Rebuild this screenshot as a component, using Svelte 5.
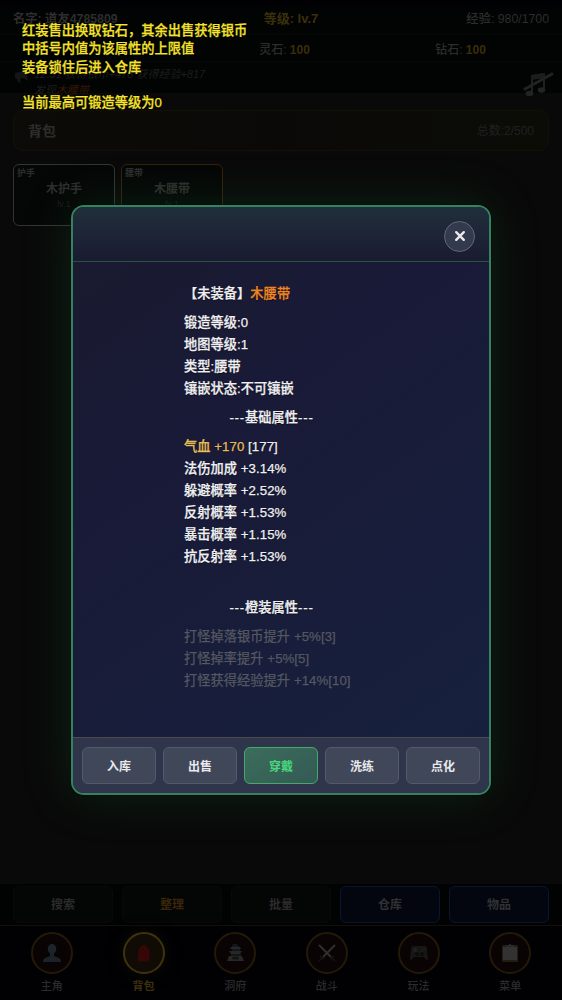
<script>
  const tips = [
    '红装售出换取钻石，其余出售获得银币',
    '中括号内值为该属性的上限值',
    '装备锁住后进入仓库',
    '',
    '当前最高可锻造等级为0'
  ];

  const items = [
    { slot: '护手', name: '木护手', level: 1, quality: 'white' },
    { slot: '腰带', name: '木腰带', level: 1, quality: 'orange' }
  ];

  const info = ['锻造等级:0', '地图等级:1', '类型:腰带', '镶嵌状态:不可镶嵌'];

  const baseStats = [
    { text: '气血 +170', max: '[177]', gold: true },
    { text: '法伤加成 +3.14%' },
    { text: '躲避概率 +2.52%' },
    { text: '反射概率 +1.53%' },
    { text: '暴击概率 +1.15%' },
    { text: '抗反射率 +1.53%' }
  ];

  const orangeStats = ['打怪掉落银币提升 +5%[3]', '打怪掉率提升 +5%[5]', '打怪获得经验提升 +14%[10]'];

  const actions = ['入库', '出售', '穿戴', '洗练', '点化'];

  const tools = [
    { label: '搜索', type: '' },
    { label: '整理', type: 'gold' },
    { label: '批量', type: '' },
    { label: '仓库', type: 'blue' },
    { label: '物品', type: 'blue' }
  ];

  const tabs = [
    { label: '主角', icon: 'user' },
    { label: '背包', icon: 'bag' },
    { label: '洞府', icon: 'castle' },
    { label: '战斗', icon: 'swords' },
    { label: '玩法', icon: 'pad' },
    { label: '菜单', icon: 'menu' }
  ];

  let currentTab = $state('背包');
  let showModal = $state(true);
</script>

<div class="game">
  <header class="status">
    <div class="status-row first">
      <span class="who">名字: <u>道友4785809</u></span>
      <span class="level">等级: lv.7</span>
      <span class="exp">经验: 980/1700</span>
    </div>
    <div class="status-row second">
      <span></span>
      <span>灵石: <b>100</b></span>
      <span>钻石: <b>100</b></span>
    </div>
  </header>

  <section class="log">
    <svg class="horn" viewBox="0 0 16 16" width="16" height="16">
      <path d="M1 5l5-1 6-4 2 13-5-3-3 1 1 4-3-1-1-3-2-1z" fill="#151515" />
    </svg>
    <div class="log-lines">
      <p>12:31 获得银币+478 获得经验+817</p>
      <p>发现<em>木腰带</em></p>
    </div>
    <svg class="music" viewBox="0 0 32 26" width="32" height="26">
      <path d="M10 20V4l12-2v16" fill="none" stroke="#202020" stroke-width="2" />
      <path d="M9 3l14-2v5L9 8z" fill="#1c1c1c" />
      <ellipse cx="7.500" cy="21.500" rx="3.800" ry="2.700" fill="#232323" />
      <ellipse cx="19.500" cy="18" rx="3.800" ry="2.700" fill="#232323" />
      <path d="M3 17L30 2" stroke="#222" stroke-width="3" stroke-linecap="round" />
    </svg>
  </section>

  <main class="content">
    <div class="title">
      <h2>背包</h2>
      <span>总数:2/500</span>
    </div>
    <div class="items">
      {#each items as item}
        <div class="item {item.quality}">
          <span class="slot">{item.slot}</span>
          <strong>{item.name}</strong>
          <small>lv.{item.level}</small>
        </div>
      {/each}
    </div>
  </main>

  <div class="tools">
    {#each tools as tool}
      <button class={tool.type}>{tool.label}</button>
    {/each}
  </div>

  <nav>
    {#each tabs as tab}
      <button class="tab" class:active={tab.label === currentTab} onclick={() => (currentTab = tab.label)}>
        <span class="circle">
          <svg viewBox="0 0 20 20" width="20" height="20">
            {#if tab.icon === 'user'}
              <ellipse cx="10" cy="6" rx="4.300" ry="5" fill="#1c242c" />
              <path d="M8 9h4v4l5 2q2 1 2 4H1q0-3 2-4l5-2z" fill="#1a222a" />
            {:else if tab.icon === 'bag'}
              <path d="M8 3q2-3 4 0 3 2 3.500 6l.5 8q-1 1.500-3 1.500H6q-2 0-2.500-1.500L4.500 8Q5 4 8 3z" fill="#350706" />
              <path d="M15 10l1 2v4l-1 2M7 11v1M12 11v1M9 6v1M11 14v1" fill="none" stroke="#200504" />
            {:else if tab.icon === 'castle'}
              <path d="M8 1h4l1 2H7z" fill="#0d1729" />
              <path d="M6 4h9l1 2H5zM4 8h13l-2 3H6zM4 13h13l2 5H2z" fill="#272727" />
              <path d="M7 3h7v1H7zM7 6h8v2H7zM6 11h10v2H6z" fill="#161616" />
              <ellipse cx="10.500" cy="15" rx="3.500" ry="1.500" fill="#121212" />
            {:else if tab.icon === 'swords'}
              <path d="M2 2l12 12M18 2L6 14" stroke="#303030" stroke-width="1.800" />
              <path d="M3 13l4 3M17 13l-4 3M5 15l-3 3M15 15l3 3" stroke="#171412" stroke-width="1.500" />
            {:else if tab.icon === 'pad'}
              <path d="M4 3h12q2 0 2 4l1 9q-1 3-4-2H5q-3 5-4 2l1-9q0-4 2-4z" fill="#151616" />
              <circle cx="6" cy="7" r="2" fill="#222" />
              <circle cx="8" cy="11" r="2" fill="#0c0c0c" />
              <circle cx="13" cy="11" r="2" fill="#0c0c0c" />
              <circle cx="15" cy="6" r="1.400" fill="#341210" />
              <circle cx="13" cy="8" r="1" fill="#102418" />
            {:else}
              <rect x="2" y="2" width="16" height="17" rx="1" fill="#211d13" />
              <rect x="3" y="4" width="14" height="13" fill="#323232" />
              <path d="M6 2h3V1h2v1h3v2H6z" fill="#292929" />
            {/if}
          </svg>
        </span>
        <span class="label">{tab.label}</span>
      </button>
    {/each}
  </nav>

  {#if showModal}
    <div class="modal">
      <div class="modal-header">
        <button class="close" aria-label="close" onclick={() => (showModal = false)}>
          <svg viewBox="0 0 12 12" width="12" height="12">
            <path d="M2.200 2.200l7.600 7.600M9.800 2.200L2.200 9.800" stroke="#e8e8ec" stroke-width="2.400" stroke-linecap="round" />
          </svg>
        </button>
      </div>
      <div class="modal-body">
        <div class="detail">
          <div class="name">【未装备】<span>木腰带</span></div>
          {#each info as line}
            <div>{line}</div>
          {/each}
          <div class="sub"><i>---</i>基础属性<i>---</i></div>
          {#each baseStats as stat}
            <div><span class:gold={stat.gold}>{stat.text}</span> {stat.max ?? ''}</div>
          {/each}
          <div class="sub orange-sub"><i>---</i>橙装属性<i>---</i></div>
          {#each orangeStats as line}
            <div class="locked">{line}</div>
          {/each}
        </div>
      </div>
      <div class="modal-footer">
        {#each actions as action}
          <button class:primary={action === '穿戴'}>{action}</button>
        {/each}
      </div>
    </div>
  {/if}

  <div class="tips">
    {#each tips as tip}
      <p class:blank={!tip}>{tip}</p>
    {/each}
  </div>
</div>

<style>
  :global(body) {
    background: #090909;
  }

  .game {
    position: relative;
    display: flex;
    flex-direction: column;
    width: 562px;
    height: 1000px;
    overflow: hidden;
    background: #090909;
    color: #2d2d2d;
    font-family: "Liberation Sans", "Noto Sans CJK SC", sans-serif;
    font-size: 13px;
  }

  p,
  h2 {
    margin: 0;
  }

  button {
    box-sizing: border-box;
    padding: 0;
    font-family: inherit;
    cursor: pointer;
  }

  .status {
    background: linear-gradient(#010104, #020303 20%);
  }

  .status-row {
    display: flex;
    box-sizing: border-box;
    align-items: center;
    border-bottom: 1px solid #070708;
    font-weight: 500;
  }

  .first {
    height: 35px;
    padding: 1px 13px 0;
    justify-content: space-between;
    font-size: 12.300px;
  }

  .who {
    width: 198px;
    font-weight: bold;
  }

  .first .level {
    flex: 1;
    color: #3b300b;
    font-size: 13px;
    font-weight: bold;
    text-align: center;
  }

  .first .exp {
    width: 178px;
    text-align: right;
  }

  .second {
    height: 27px;
    padding: 0 13px;
    font-size: 12px;
  }

  .second span {
    width: 176px;
    text-align: center;
  }

  .second span:nth-child(2) {
    width: 191px;
  }

  .second span:nth-child(3) {
    width: 161px;
  }

  .second b {
    color: #3b2e08;
  }

  .log {
    display: flex;
    height: 31px;
    padding: 0 8px 0 14px;
    background: #020303;
  }

  .horn {
    margin-top: 6px;
  }

  .log-lines {
    flex: 1;
    margin: 4px 0 0 4px;
    color: #1d1d1d;
    font-size: 11px;
    font-style: italic;
    line-height: 16px;
  }

  .log em {
    color: #321806;
  }

  .music {
    margin-top: 10px;
  }

  .content {
    flex: 1;
    padding: 17px 13px 0;
  }

  .title {
    display: flex;
    box-sizing: border-box;
    height: 41px;
    padding: 0 14px 2px;
    align-items: center;
    justify-content: space-between;
    border: 1px solid #121107;
    border-radius: 10px;
    background: linear-gradient(90deg, #0c0b07, #0a0907 50%, #0c0c07);
    color: #202020;
    font-size: 12px;
  }

  .title h2 {
    color: #2d2d2d;
    font-size: 14px;
  }

  .items {
    display: flex;
    gap: 6px;
    margin-top: 13px;
  }

  .item {
    position: relative;
    display: flex;
    box-sizing: border-box;
    width: 102px;
    height: 62px;
    flex-direction: column;
    align-items: center;
    border: 1.500px solid #333;
    border-radius: 6px;
    background: #050606;
  }

  .item.orange {
    border-color: #382008;
  }

  .slot {
    position: absolute;
    top: 2px;
    left: 3px;
    font-size: 9px;
    font-weight: bold;
    line-height: 13px;
  }

  .item strong {
    margin-top: 15px;
    font-size: 12px;
    line-height: 18px;
  }

  .item small {
    color: #1b1b1b;
    font-size: 9px;
    line-height: 12px;
  }

  .tools {
    display: flex;
    box-sizing: border-box;
    height: 42px;
    gap: 9px;
    padding: 2px 13px 2px;
    border-bottom: 1px solid #151007;
    background: #010202;
  }

  .tools button {
    flex: 1;
    padding-bottom: 2px;
    border: 1px solid #090909;
    border-radius: 6px;
    background: #040505;
    color: #2b2b2b;
    font-size: 12px;
    font-weight: bold;
  }

  .tools .gold {
    color: #392709;
  }

  .tools .blue {
    border-color: #091630;
    background: #03060e;
    color: #303132;
  }

  nav {
    display: flex;
    height: 68px;
    padding: 6px 6px 0;
    box-sizing: content-box;
    background: #010103;
  }

  .tab {
    display: flex;
    flex: 1;
    flex-direction: column;
    align-items: center;
    border: 0;
    background: none;
    color: #2b2b2b;
    font-size: 11px;
    font-weight: 500;
  }

  .circle {
    display: flex;
    box-sizing: border-box;
    width: 42px;
    height: 42px;
    align-items: center;
    justify-content: center;
    border: 2px solid #231909;
    border-radius: 50%;
    background: #090403;
  }

  .label {
    margin-top: 4px;
    line-height: 16px;
  }

  .active .circle {
    border-color: #3e330b;
    background: #100c05;
    box-shadow: 0 0 16px #100d07;
  }

  .active .label {
    color: #3b300b;
    font-weight: bold;
  }

  .modal {
    position: absolute;
    top: 205px;
    left: 71px;
    display: flex;
    box-sizing: border-box;
    width: 420px;
    height: 590px;
    flex-direction: column;
    overflow: hidden;
    border: 2px solid #358260;
    border-radius: 13px;
    background: linear-gradient(145deg, #1a1a2e, #191a37 35%, #16213e);
    box-shadow: 0 0 2px #000, 0 0 50px rgba(38, 130, 70, 0.22);
    color: #f0f0f3;
    font-size: 13.200px;
    font-weight: 500;
  }

  .modal-header {
    display: flex;
    box-sizing: border-box;
    height: 55px;
    padding: 4px 14px 0;
    align-items: center;
    justify-content: flex-end;
    border-bottom: 1px solid #24533f;
    background: linear-gradient(#202f3b, #1a1b31);
  }

  .close {
    display: flex;
    width: 31px;
    height: 31px;
    align-items: center;
    justify-content: center;
    border: 1px solid #62667a;
    border-radius: 50%;
    background: #343a4d;
  }

  .modal-body {
    flex: 1;
    padding-top: 21px;
    line-height: 22px;
    text-shadow: 0 1px 1px rgba(0, 0, 0, 0.6);
    -webkit-text-stroke: 0.250px;
  }

  .detail {
    width: 175px;
    margin-left: 111px;
    letter-spacing: 0.080px;
    white-space: nowrap;
  }

  .name {
    margin-bottom: 7px;
  }

  .name span {
    color: #ef8624;
  }

  .sub {
    margin: 7px 0;
    text-align: center;
  }

  .sub i {
    font-style: normal;
    letter-spacing: 0.800px;
  }

  .orange-sub {
    margin-top: 29px;
  }

  .gold {
    color: #e6bd5c;
  }

  .locked {
    color: #555861;
    text-shadow: none;
    font-weight: normal;
  }

  .modal-footer {
    display: flex;
    box-sizing: border-box;
    height: 56px;
    gap: 7px;
    padding: 9px;
    border-top: 1px solid #4c4a4c;
    background: #2f364c;
  }

  .modal-footer button {
    flex: 1;
    padding-bottom: 1px;
    border: 1px solid #545a69;
    border-radius: 6px;
    background: #404759;
    color: #e9e9ed;
    font-size: 12px;
    font-weight: bold;
  }

  .modal-footer .primary {
    border-color: #43aa6b;
    background: linear-gradient(145deg, #3b6d5b, #345a55);
    color: #48d77d;
  }

  .tips {
    position: absolute;
    top: 22px;
    left: 22px;
    color: #f5e32d;
    font-size: 13.250px;
    font-weight: 500;
    line-height: 18.300px;
    text-shadow: 0 0 2px #000;
    -webkit-text-stroke: 0.250px;
  }

  .tips .blank {
    height: 17px;
  }
</style>
